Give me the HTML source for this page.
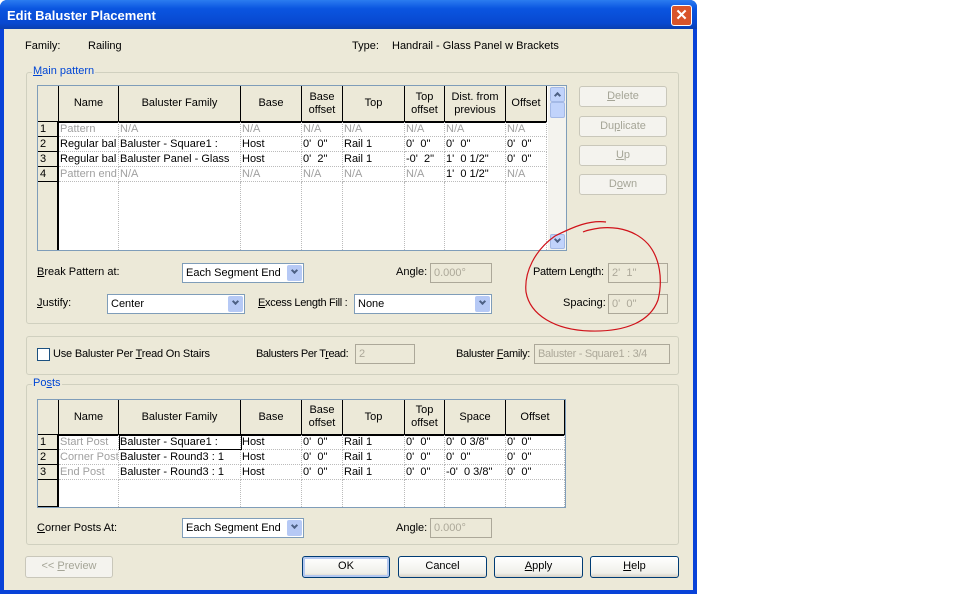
<!DOCTYPE html>
<html><head><style>
*{box-sizing:border-box;margin:0;padding:0}
body{width:960px;height:600px;background:#fff;font-family:"Liberation Sans",sans-serif;font-size:11px;color:#000;position:relative;overflow:hidden}
.a{position:absolute}
.win{left:0;top:0;width:697px;height:594px;background:#0842d8;border-radius:7px 7px 0 0}
.title{left:0;top:0;width:697px;height:29px;background:linear-gradient(#2b7cf0,#0a55e0 30%,#0848d0 80%,#0a3fb0);border-radius:7px 7px 0 0;color:#fff;font-weight:bold;font-size:13px;padding:8px 0 0 7px}
.close{left:671px;top:5px;width:21px;height:21px;background:#d9542a;border:1px solid #fff;border-radius:3px;color:#fff;font-size:15px;font-weight:bold;text-align:center;line-height:19px}
.body{left:4px;top:29px;width:689px;height:561px;background:#ece9d8}
.grp{border:1px solid #d0d0bf;border-radius:3px}
.gl{background:#ece9d8;color:#0046d5;padding:0 1px}
.grid{background:#fff;border:1px solid #7f9db9}
.hc{position:absolute;background:#ece9d8;border-right:1px solid #000;border-bottom:2px solid #000;text-align:center;display:flex;align-items:center;justify-content:center;line-height:13px}
.cell{position:absolute;border-right:1px dotted #bbb;border-bottom:1px dotted #bbb;white-space:nowrap;overflow:hidden;padding-left:1px;height:15px;line-height:14px}
.g{color:#a0a0a0}
.rh{position:absolute;background:#ece9d8;border-right:2px solid #000;border-bottom:1px solid #000;padding-left:2px;line-height:14px}
.btn{position:absolute;border:1px solid #003c74;border-radius:3px;background:linear-gradient(#fff,#f0f0ea 80%,#d6d0c5);text-align:center;line-height:19px;font-size:11px}
.btnd{border-color:#c9c7ba;color:#a5a597;background:#f4f3ee}
.combo{position:absolute;background:#fff;border:1px solid #7f9db9;font-size:11px;padding:3px 0 0 3px;height:20px;white-space:nowrap}
.combo:after{content:"";position:absolute;right:1px;top:1px;width:15px;height:16px;background:#b6c9f5;border-radius:2px}
.combo i{position:absolute;right:6px;top:4px;width:5px;height:5px;border-right:2px solid #4d6185;border-bottom:2px solid #4d6185;transform:rotate(45deg);z-index:2}
.dis{position:absolute;border:1px solid #aca899;background:#ece9d8;color:#aca899;height:20px;padding:3px 0 0 3px;font-size:11px;white-space:nowrap;overflow:hidden}
.lbl{position:absolute;font-size:11px;white-space:nowrap}
.sb{position:absolute;width:15px;height:15px;background:#c1d3fb;border:1px solid #a4b9e6;border-radius:2px}
.sb i{position:absolute;left:4px;width:5px;height:5px;border-right:2px solid #4d6185;border-bottom:2px solid #4d6185}
u{text-decoration:underline}
</style></head><body>
<div class="a win"></div>
<div class="a title">Edit Baluster Placement</div>
<div class="a close">✕</div>
<div class="a body"></div>

<div class="lbl" style="left:25px;top:40px">Family:</div>
<div class="lbl" style="left:88px;top:40px">Railing</div>
<div class="lbl" style="left:352px;top:40px">Type:</div>
<div class="lbl" style="left:392px;top:40px">Handrail - Glass Panel w Brackets</div>

<div class="a grp" style="left:26px;top:72px;width:653px;height:252px"></div>
<div class="a gl" style="left:32px;top:65px"><u>M</u>ain pattern</div>

<div class="a grid" style="left:37px;top:85px;width:530px;height:166px"></div>
<div class="a" style="left:38px;top:86px;width:21px;height:164px;background:#ece9d8;border-right:2px solid #000"></div>
<div class="hc" style="left:38px;top:86px;width:21px;height:37px"></div>
<div class="hc" style="left:59px;top:86px;width:60px;height:37px">Name</div>
<div class="hc" style="left:119px;top:86px;width:122px;height:37px">Baluster Family</div>
<div class="hc" style="left:241px;top:86px;width:61px;height:37px">Base</div>
<div class="hc" style="left:302px;top:86px;width:41px;height:37px">Base<br>offset</div>
<div class="hc" style="left:343px;top:86px;width:62px;height:37px">Top</div>
<div class="hc" style="left:405px;top:86px;width:40px;height:37px">Top<br>offset</div>
<div class="hc" style="left:445px;top:86px;width:61px;height:37px">Dist. from<br>previous</div>
<div class="hc" style="left:506px;top:86px;width:41px;height:37px">Offset</div>
<div class="a" style="left:548px;top:86px;width:18px;height:164px;background:#f4f3ee"></div>
<div class="sb" style="left:550px;top:87px"><i style="top:5px;transform:rotate(-135deg)"></i></div>
<div class="sb" style="left:550px;top:102px;height:16px"></div>
<div class="sb" style="left:550px;top:234px"><i style="top:2px;transform:rotate(45deg)"></i></div>

<div id="mp"></div>
<script>
function rows(el,top,data,cols){var h='';var rn=1;data.forEach(function(r,i){var y=top+i*15;h+='<div class="rh" style="left:38px;top:'+y+'px;width:21px;height:15px">'+(r?rn++:'')+'</div>';for(var c=0;c<cols.length-1;c++){var txt=r?r[c]:'';var g='';if(r&&r.ga&&r.ga.indexOf(c)>=0)g=' g';h+='<div class="cell'+g+'" style="left:'+cols[c]+'px;top:'+y+'px;width:'+(cols[c+1]-cols[c])+'px">'+txt+'</div>';}});el.innerHTML=h;}
var cols=[59,119,241,302,343,405,445,506,547];
var d1=[["Pattern","N/A","N/A","N/A","N/A","N/A","N/A","N/A"],["Regular bal","Baluster - Square1 :","Host","0'&nbsp; 0\"","Rail 1","0'&nbsp; 0\"","0'&nbsp; 0\"","0'&nbsp; 0\""],["Regular bal","Baluster Panel - Glass","Host","0'&nbsp; 2\"","Rail 1","-0'&nbsp; 2\"","1'&nbsp; 0 1/2\"","0'&nbsp; 0\""],["Pattern end","N/A","N/A","N/A","N/A","N/A","1'&nbsp; 0 1/2\"","N/A"]];
d1[0].ga=[0,1,2,3,4,5,6,7];d1[3].ga=[0,1,2,3,4,5,7];
rows(document.getElementById('mp'),122,d1,cols);
var e=document.createElement('div');e.innerHTML='<div class="a" style="left:38px;top:182px;width:21px;height:68px;background:#ece9d8;border-right:2px solid #000"></div>'+[119,241,302,343,405,445,506,547].map(function(x){return '<div class="a" style="left:'+(x-1)+'px;top:182px;height:68px;border-left:1px dotted #bbb"></div>'}).join('');document.body.appendChild(e);
</script>

<div class="btn btnd" style="left:579px;top:86px;width:88px;height:21px"><u>D</u>elete</div>
<div class="btn btnd" style="left:579px;top:116px;width:88px;height:21px">Du<u>p</u>licate</div>
<div class="btn btnd" style="left:579px;top:145px;width:88px;height:21px"><u>U</u>p</div>
<div class="btn btnd" style="left:579px;top:174px;width:88px;height:21px">D<u>o</u>wn</div>

<div class="lbl" style="left:37px;top:266px"><u>B</u>reak Pattern at:</div>
<div class="combo" style="left:182px;top:263px;width:122px">Each Segment End<i></i></div>
<div class="lbl" style="left:396px;top:266px">An<u>g</u>le:</div>
<div class="dis" style="left:430px;top:263px;width:62px">0.000°</div>
<div class="lbl" style="left:533px;top:266px;letter-spacing:-0.3px">Pattern Length:</div>
<div class="dis" style="left:608px;top:263px;width:60px">2'&nbsp; 1''</div>

<div class="lbl" style="left:37px;top:297px"><u>J</u>ustify:</div>
<div class="combo" style="left:107px;top:294px;width:138px">Center<i></i></div>
<div class="lbl" style="left:258px;top:297px;letter-spacing:-0.3px"><u>E</u>xcess Length Fill :</div>
<div class="combo" style="left:354px;top:294px;width:138px">None<i></i></div>
<div class="lbl" style="left:563px;top:297px">Spacing:</div>
<div class="dis" style="left:608px;top:294px;width:60px">0'&nbsp; 0''</div>

<div class="a grp" style="left:26px;top:336px;width:653px;height:39px"></div>
<div class="a" style="left:37px;top:348px;width:13px;height:13px;border:1px solid #1c5180;background:#fff"></div>
<div class="lbl" style="left:53px;top:348px;letter-spacing:-0.2px">Use Baluster Per <u>T</u>read On Stairs</div>
<div class="lbl" style="left:256px;top:348px;letter-spacing:-0.4px">Balusters Per T<u>r</u>ead:</div>
<div class="dis" style="left:355px;top:344px;width:60px">2</div>
<div class="lbl" style="left:456px;top:348px;letter-spacing:-0.3px">Baluster <u>F</u>amily:</div>
<div class="dis" style="left:534px;top:344px;width:136px;letter-spacing:-0.3px">Baluster - Square1 : 3/4</div>

<div class="a grp" style="left:26px;top:384px;width:653px;height:161px"></div>
<div class="a gl" style="left:32px;top:377px">Po<u>s</u>ts</div>
<div class="a grid" style="left:37px;top:399px;width:529px;height:109px"></div>
<div class="a" style="left:38px;top:400px;width:21px;height:107px;background:#ece9d8;border-right:2px solid #000"></div>
<div class="hc" style="left:38px;top:400px;width:21px;height:36px"></div>
<div class="hc" style="left:59px;top:400px;width:60px;height:36px">Name</div>
<div class="hc" style="left:119px;top:400px;width:122px;height:36px">Baluster Family</div>
<div class="hc" style="left:241px;top:400px;width:61px;height:36px">Base</div>
<div class="hc" style="left:302px;top:400px;width:41px;height:36px">Base<br>offset</div>
<div class="hc" style="left:343px;top:400px;width:62px;height:36px">Top</div>
<div class="hc" style="left:405px;top:400px;width:40px;height:36px">Top<br>offset</div>
<div class="hc" style="left:445px;top:400px;width:61px;height:36px">Space</div>
<div class="hc" style="left:506px;top:400px;width:59px;height:36px">Offset</div>
<div id="pp"></div>
<script>
var cols2=[59,119,241,302,343,405,445,506,565];
var d2=[["Start Post","Baluster - Square1 :","Host","0'&nbsp; 0\"","Rail 1","0'&nbsp; 0\"","0'&nbsp; 0 3/8\"","0'&nbsp; 0\""],["Corner Post","Baluster - Round3 : 1","Host","0'&nbsp; 0\"","Rail 1","0'&nbsp; 0\"","0'&nbsp; 0\"","0'&nbsp; 0\""],["End Post","Baluster - Round3 : 1","Host","0'&nbsp; 0\"","Rail 1","0'&nbsp; 0\"","-0'&nbsp; 0 3/8\"","0'&nbsp; 0\""]];
d2.forEach(function(r){r.ga=[0]});
rows(document.getElementById('pp'),435,d2,cols2);
var e2=document.createElement('div');e2.innerHTML='<div class="rh" style="left:38px;top:480px;width:21px;height:27px"></div>'+cols2.slice(1).map(function(x){return '<div class="a" style="left:'+(x-1)+'px;top:480px;height:27px;border-left:1px dotted #bbb"></div>'}).join('')+'<div class="a" style="left:119px;top:435px;width:123px;height:15px;border:1px solid #000"></div>';document.body.appendChild(e2);
</script>

<div class="lbl" style="left:37px;top:522px"><u>C</u>orner Posts At:</div>
<div class="combo" style="left:182px;top:518px;width:122px">Each Segment End<i></i></div>
<div class="lbl" style="left:396px;top:522px">An<u>g</u>le:</div>
<div class="dis" style="left:430px;top:518px;width:62px">0.000°</div>

<div class="btn btnd" style="left:25px;top:556px;width:88px;height:22px">&lt;&lt; <u>P</u>review</div>
<div class="btn" style="left:302px;top:556px;width:88px;height:22px;box-shadow:inset 0 0 0 2px #b4c8f0">OK</div>
<div class="btn" style="left:398px;top:556px;width:89px;height:22px">Cancel</div>
<div class="btn" style="left:494px;top:556px;width:89px;height:22px"><u>A</u>pply</div>
<div class="btn" style="left:590px;top:556px;width:89px;height:22px"><u>H</u>elp</div>

<svg class="a" style="left:0;top:0" width="960" height="600"><path d="M606 222 C590 220 575 226 555 236 C535 250 524 272 526 292 C530 315 555 330 590 331 C625 332 650 322 658 300 C663 280 660 258 648 244 C637 232 620 226 600 228 C592 229 585 231 583 232" fill="none" stroke="#d0121a" stroke-width="1.2"/></svg>
</body></html>
